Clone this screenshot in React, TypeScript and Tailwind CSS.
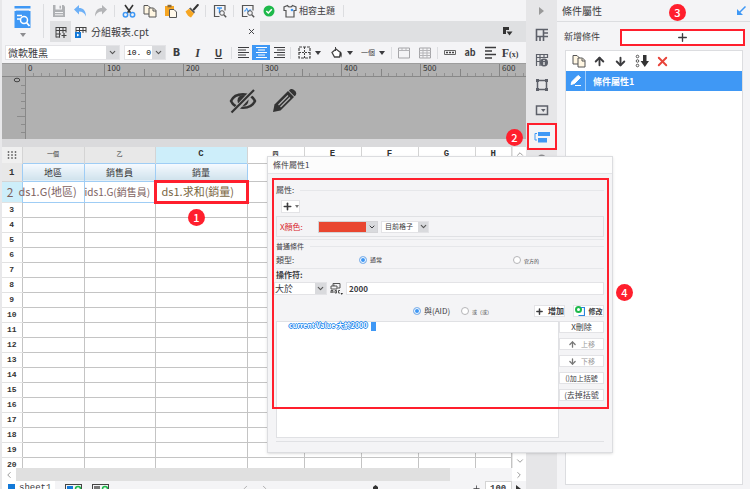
import type { ReactNode } from 'react'
import { clsx } from 'clsx'
import { ArrowDown, ArrowUp, ChevronDown, ChevronLeft, ChevronRight, ChevronUp, Plus, X } from 'lucide-react'

type IconProps = { className?: string }

const columns = [
  { label: '一個', className: 'w-[62px] text-[6px] font-normal' },
  { label: '乙', className: 'w-[71px] text-[6px] font-normal' },
  { label: 'C', className: 'w-[92px] text-[9px]' },
  { label: '四', className: 'w-[57px] text-[6px]' },
  { label: 'E', className: 'w-[57px] text-[9px]' },
  { label: 'F', className: 'w-[57px] text-[9px]' },
  { label: 'G', className: 'w-[57px] text-[9px]' },
  { label: 'H', className: 'text-[9px]' },
]
const emptyRows = Array.from({ length: 18 }, (_, i) => i + 3)

function Svg({ w = 14, h = 14, children, className }: { w?: number; h?: number; children: ReactNode; className?: string }) {
  return (
    <svg width={w} height={h} viewBox={`0 0 ${w} ${h}`} fill="none" aria-hidden="true" className={clsx('shrink-0', className)}>
      {children}
    </svg>
  )
}

function SaveIcon() {
  return (
    <Svg>
      <path d="M1 1h10.500l1.500 1.500v10.500h-12z" fill="#aeb0b3" />
      <path d="M3.500 1h6.500v4.500h-6.500z" fill="#f4f4f6" />
      <path d="M7.500 1.800h1.500v2.700h-1.500z" fill="#aeb0b3" />
      <path d="M3 8.500h8M3 10.800h8" stroke="#f4f4f6" />
    </Svg>
  )
}

function UndoIcon({ className }: IconProps) {
  return (
    <Svg className={className}>
      <path d="M1 5.500L6 1v3c4 0 7 2.500 7 8.500C11.500 9 9.500 7.500 6 7.500v3z" fill="currentColor" />
    </Svg>
  )
}

function CutIcon() {
  return (
    <Svg>
      <path d="M3 1l6 8.500M11 1l-6 8.500" stroke="#333" strokeWidth="1.600" />
      <circle cx="3.500" cy="10.800" r="2.200" stroke="#3f98f5" strokeWidth="1.500" />
      <circle cx="10.500" cy="10.800" r="2.200" stroke="#3f98f5" strokeWidth="1.500" />
    </Svg>
  )
}

function CopyIcon() {
  return (
    <Svg>
      <path d="M1 1.500h4l2.500 2.500v6h-6.500z" fill="#fff6e2" stroke="#555" />
      <path d="M6 4h4.500l2.500 2.500v6.500h-7z" fill="#fff6e2" stroke="#555" />
      <path d="M10 4.500v2.500h3" stroke="#555" />
    </Svg>
  )
}

function PasteIcon() {
  return (
    <Svg>
      <path d="M1 2h9v10h-9z" fill="#f6a623" />
      <path d="M3.500 0.800h4v2.500h-4z" fill="#8a6a3a" />
      <path d="M5.500 5.500h4.500l2.500 2.500v5.500h-7z" fill="#fff8ea" stroke="#555" />
    </Svg>
  )
}

function BrushIcon() {
  return (
    <Svg>
      <path d="M12.800 1l-4 4.500" stroke="#333" strokeWidth="2" strokeLinecap="round" />
      <path d="M5.500 3.500l4.500 4.500-1 1.500-5-5z" fill="#555" />
      <path d="M4 4.800l5 4.800-3 3.900c-2-.5-4-2.500-5.500-6z" fill="#f6a623" />
    </Svg>
  )
}

function PreviewIcon({ chart }: { chart?: boolean }) {
  return (
    <Svg>
      <path d="M12 6.500v-5h-10.500v11h5" stroke="#555" strokeWidth="1.200" />
      {chart ? <path d="M3 7h1.500l1.200-3 1.500 4 1-2h2" stroke="#3f98f5" /> : <path d="M4 4h5M6.500 4v5" stroke="#3f98f5" strokeWidth="1.400" />}
      <circle cx="9" cy="9" r="2.300" stroke="#555" />
      <path d="M10.800 10.800l2.400 2.400" stroke="#555" strokeWidth="1.500" />
    </Svg>
  )
}

function CheckBadge() {
  return (
    <Svg w={12} h={12}>
      <circle cx="6" cy="6" r="5.500" fill="#1eb94b" />
      <path d="M3.300 6l2 2 3.500-3.800" stroke="#fff" strokeWidth="1.500" />
    </Svg>
  )
}

function ShirtIcon() {
  return (
    <Svg>
      <path d="M4.500 1.500L1 3v3.500h2v6.500h8V6.500h2V3l-3.500-1.500C9 3.500 5 3.500 4.500 1.500z" stroke="#555" strokeWidth="1.200" />
      <circle cx="9" cy="6" r="1.300" fill="#3f98f5" />
    </Svg>
  )
}

function GridIcon({ accent }: { accent?: boolean }) {
  return (
    <Svg w={12} h={12}>
      <path d="M1 1.500h10M1 4.500h10M1 8h5M1 1v10.500M4.500 1v10.500M8 1v6M11 1v5.500M1 11h4" stroke="#444" />
      {accent ? <path d="M0 6h6v6h-6z" fill="#1379d8" /> : <path d="M9 7v5M6.500 9.500h5" stroke="#444" strokeWidth="1.200" />}
      {accent && <path d="M2 7.500l2.500 1.500-2.500 1.500" fill="#fff" />}
    </Svg>
  )
}

function AlignIcon({ kind }: { kind: 'left' | 'center' | 'right' | 'mixed' }) {
  const paths = {
    left: 'M1 1.500h11M1 4h8M1 6.500h11M1 9h8M1 11.500h11',
    center: 'M1 1.500h11M3 4h7M1 6.500h11M3 9h7M1 11.500h11',
    right: 'M1 1.500h11M4 4h8M1 6.500h11M4 9h8M1 11.500h11',
    mixed: 'M1 1.500h11M1 5h7M1 8.500h11M1 12h7',
  }
  return (
    <Svg w={13} h={13}>
      <path d={paths[kind]} stroke="currentColor" strokeWidth={kind === 'mixed' ? 1.7 : 1.2} />
    </Svg>
  )
}

function Caret({ className }: IconProps) {
  return (
    <Svg w={6} h={4} className={className}>
      <path d="M0 0h6l-3 4z" fill="currentColor" />
    </Svg>
  )
}

function BorderIcon() {
  return (
    <Svg w={13} h={13}>
      <path d="M1 1h11v11h-11z" stroke="#444" strokeWidth="1.200" strokeDasharray="3 1" />
      <path d="M6.500 1v11M1 6.500h11" stroke="#444" strokeDasharray="2 1" />
    </Svg>
  )
}

function FillIcon() {
  return (
    <Svg w={13} h={13}>
      <path d="M2 6.500l4-3.500 4.500 3.500-1 4.500h-5z" fill="#fff" stroke="#444" strokeWidth="1.300" />
      <path d="M5.500 5v-4" stroke="#444" />
      <path d="M10 5.500c2 .5 2 3 1.300 6-1-.7-1.800-3-1.300-6z" fill="#333" />
    </Svg>
  )
}

function CellsIcon({ grid }: { grid?: boolean }) {
  return (
    <Svg w={12} h={12}>
      <path d="M.5 1h11v10h-11z" stroke="#a5a5a8" />
      <path d={grid ? 'M.5 3.500h11M.5 6h11M.5 8.500h11M4 1v10M8 1v10' : 'M.5 3.500h11M4 1v2.500M8 1v2.500'} stroke="#b5b5b8" />
    </Svg>
  )
}

function ToolButton({ label, className, children }: { label: string; className?: string; children: ReactNode }) {
  return (
    <button type="button" aria-label={label} className={clsx('flex shrink-0 items-center justify-center', className ?? 'h-5 w-[21px]')}>
      {children}
    </button>
  )
}

function Separator({ className = 'mx-[3px]' }: IconProps) {
  return <span className={clsx('h-3 w-px shrink-0 bg-[#dcdde0]', className)} />
}

function SelectBox({ label, value, className, selectClass }: { label: string; value: string; className?: string; selectClass?: string }) {
  return (
    <span className={clsx('relative flex shrink-0 border border-[#e3e3e6] bg-white', className)}>
      <select aria-label={label} className={clsx('w-full appearance-none truncate bg-transparent leading-none outline-none', selectClass)}>
        <option>{value}</option>
      </select>
      <span className="pointer-events-none absolute inset-y-0 right-0 flex aspect-square items-center justify-center bg-[#d9dadd] text-[#555]">
        <ChevronDown size={9} strokeWidth={3} />
      </span>
    </span>
  )
}

function Badge({ n, className }: { n: number; className: string }) {
  return (
    <span className={clsx('absolute z-20 flex size-[17px] items-center justify-center rounded-full bg-[#ff1f2d] text-[11px] leading-none font-medium text-white', className)}>
      {n}
    </span>
  )
}

function Header() {
  return (
    <div className="flex h-[42px] shrink-0">
      <div className="flex w-[46px] shrink-0">
        <button type="button" aria-label="選單" className="flex w-[41px] flex-col items-center gap-[5px] pt-1.5 text-[#8d8d90]">
          <Svg w={17} h={22}>
            <path d="M.5 0h16v2.500h-16z" fill="#3f98f5" />
            <path d="M.5 5h16v17h-16z" fill="#3f98f5" />
            <path d="M2 5h13v-1h-13z" fill="#a9d0fb" />
            <path d="M3 9.500h5M3 13h3" stroke="#fff" strokeWidth="1.500" />
            <circle cx="10" cy="14" r="3.500" stroke="#fff" strokeWidth="1.500" />
            <path d="M12.500 16.500l3 3.500" stroke="#fff" strokeWidth="1.800" />
          </Svg>
          <Caret />
        </button>
        <span className="mt-1 h-[34px] w-px bg-[#dcdde0]" />
      </div>
      <div className="flex min-w-0 flex-1 flex-col">
        <div className="flex h-[21px] items-center">
          <ToolButton label="儲存"><SaveIcon /></ToolButton>
          <ToolButton label="復原" className="w-[21px] text-[#6db0f7]"><UndoIcon /></ToolButton>
          <ToolButton label="重做" className="w-[21px] text-[#b3b4b7]"><UndoIcon className="-scale-x-100" /></ToolButton>
          <Separator />
          <ToolButton label="剪下"><CutIcon /></ToolButton>
          <ToolButton label="複製"><CopyIcon /></ToolButton>
          <ToolButton label="貼上"><PasteIcon /></ToolButton>
          <ToolButton label="格式刷"><BrushIcon /></ToolButton>
          <Separator />
          <ToolButton label="預覽"><PreviewIcon /></ToolButton>
          <Separator />
          <ToolButton label="分析"><PreviewIcon chart /></ToolButton>
          <ToolButton label="檢查"><CheckBadge /></ToolButton>
          <button type="button" className="flex items-center gap-0.5 pl-1 text-[9px] leading-none">
            <ShirtIcon /> 相容主題
          </button>
          <Separator className="ml-2" />
        </div>
        <div className="ml-0.5 flex h-[21px] items-center bg-[#dfe0e2]">
          <ToolButton label="新增範本"><GridIcon /></ToolButton>
          <div className="flex h-full w-[189px] items-center gap-1 bg-[#f4f4f6] px-1 text-[10px] leading-none">
            <GridIcon accent />
            分組報表.cpt
            <button type="button" aria-label="關閉" className="ml-auto"><X size={9} strokeWidth={2.5} /></button>
          </div>
          <ToolButton label="範本清單" className="mr-2 ml-auto w-5">
            <Svg w={10} h={9}>
              <path d="M0 0h6v3h-3v4h-3z" fill="#333" />
              <path d="M3.500 4.500h6l-3 4z" fill="#333" />
            </Svg>
          </ToolButton>
        </div>
      </div>
    </div>
  )
}

function FormatBar() {
  return (
    <div className="flex h-[21px] shrink-0 items-center pl-[3px]">
      <SelectBox label="字型" value="微軟雅黑" className="mr-1 h-[15px] w-[115px]" selectClass="pl-0.5 text-[10px]" />
      <SelectBox label="字型大小" value="10. 0" className="h-[15px] w-[42px]" selectClass="pl-0.5 font-['Liberation_Mono',monospace] text-[8px] text-black" />
      <ToolButton label="粗體"><b className="font-['DejaVu_Sans',sans-serif] text-[10px]">B</b></ToolButton>
      <ToolButton label="斜體"><i className="font-['Liberation_Serif',serif] text-[12px] font-bold">I</i></ToolButton>
      <ToolButton label="底線"><span className="text-[10px] leading-none font-bold underline">U</span></ToolButton>
      <Separator className="mx-0.5" />
      <ToolButton label="靠左" className="w-[18px]"><AlignIcon kind="left" /></ToolButton>
      <button type="button" aria-label="置中" className="flex h-[15px] w-[18px] shrink-0 items-center justify-center bg-[#3f98f5] text-white"><AlignIcon kind="center" /></button>
      <ToolButton label="靠右" className="w-[18px]"><AlignIcon kind="right" /></ToolButton>
      <Separator className="mx-0.5" />
      <ToolButton label="框線" className="w-8 gap-1"><BorderIcon /><Caret /></ToolButton>
      <ToolButton label="填滿" className="w-8 gap-1"><FillIcon /><Caret /></ToolButton>
      <ToolButton label="樣式" className="w-8 gap-1"><span className="text-[7px] leading-none whitespace-nowrap">一個</span><Caret /></ToolButton>
      <Separator className="mx-0.5" />
      <ToolButton label="合併儲存格" className="w-5"><CellsIcon /></ToolButton>
      <ToolButton label="取消合併"><CellsIcon grid /></ToolButton>
      <Separator className="mx-0.5" />
      <ToolButton label="按鈕" className="w-5">
        <Svg w={12} h={5}><path d="M.5.500h11v4h-11z" stroke="#666" /><path d="M2 2.500h8" stroke="#444" strokeWidth="1.500" strokeDasharray="2 1" /></Svg>
      </ToolButton>
      <ToolButton label="文字" className="w-5"><span className="text-[9px] leading-none font-bold">ab</span></ToolButton>
      <ToolButton label="段落" className="w-5"><AlignIcon kind="mixed" /></ToolButton>
      <ToolButton label="公式" className="w-5"><span className="font-['Liberation_Serif',serif] text-[12px] font-bold">F<span className="text-[8px]">(x)</span></span></ToolButton>
    </div>
  )
}

function Canvas() {
  return (
    <div className="flex h-[76px] shrink-0 flex-col overflow-hidden border-t border-[#9d9d9d] bg-[#b1b1b1]">
      <div className="flex h-[13px] shrink-0 border-b border-[#888] pl-[23px] text-[8px] leading-none text-[#333]">
        {[0, 100, 200, 300, 400, 500, 600].map((n) => (
          <div key={n} className="relative w-[79px] shrink-0 pl-[3px]">
            {n}
            <Svg w={79} h={12} className="absolute inset-0">
              <path d="M.5 0v12M40.500 5v7" stroke="#858585" />
              <path d="M8.500 9v3M16.500 9v3M24.500 9v3M32.500 9v3M47.500 9v3M55.500 9v3M63.500 9v3M71.500 9v3" stroke="#909090" />
            </Svg>
          </div>
        ))}
      </div>
      <div className="flex min-h-0 flex-1">
        <div className="w-[24px] shrink-0 border-r border-[#888] bg-[#adadad]">
          <Svg w={23} h={62}>
            <path d="M19 8.500h4M19 16.500h4M19 24.500h4M19 31.500h4M15 39.500h8M19 47.500h4M19 55.500h4" stroke="#8b8b8b" />
            <ellipse cx="15" cy="3" rx="2.800" ry="1.800" stroke="#444" />
          </Svg>
        </div>
        <div className="flex flex-1 gap-[15px] pt-2.5 pl-[203px] text-[#333]">
          <Svg w={28} h={28}>
            <path d="M2 14c4-9 20-9 24 0-4 9-20 9-24 0z" stroke="currentColor" strokeWidth="2.500" />
            <circle cx="14" cy="13.500" r="5.500" fill="currentColor" />
            <path d="M25.500 2.500L5 24.500" stroke="#b1b1b1" strokeWidth="5" />
            <path d="M25 3L2.500 25.500" stroke="currentColor" strokeWidth="2.200" />
          </Svg>
          <Svg w={26} h={26}>
            <path d="M1 25l1.500-7.500L16 4l6 6L8.500 23.500z" fill="currentColor" />
            <path d="M17.500 3c2-3 9 2 6 5.500l-1 .8-5.500-5.500z" fill="currentColor" />
            <path d="M6.500 18L16 8.500M8.500 20L18 10.500" stroke="#b1b1b1" strokeWidth="1.200" />
          </Svg>
        </div>
      </div>
    </div>
  )
}

function Sheet() {
  return (
    <div className="flex min-h-0 flex-1 border-t-8 border-[#dadadc] bg-white">
      <div className="min-w-0 flex-1 overflow-hidden">
        <table className="w-full table-fixed border-collapse leading-none text-[#333]">
          <thead className="font-['Liberation_Mono','Noto_Sans_CJK_TC',monospace]">
            <tr className="h-4">
              <th className="w-[20px] border-r border-[#d4d4d4] bg-[#f0f0f0] p-0" aria-label="全選">
                <Svg w={10} h={8} className="mx-auto">
                  <path d="M1.500 0v8M5 0v8M8.500 0v8" stroke="#777" strokeWidth="1.500" strokeDasharray="2 1" />
                </Svg>
              </th>
              {columns.map((col, i) => (
                <th key={col.label} className={clsx('border-x border-[#d4d4d4] p-0', col.className, i < 2 && 'bg-[#e8e8e8]', i === 2 && 'bg-[#cdeefa]')}>
                  {col.label}
                </th>
              ))}
            </tr>
          </thead>
          <tbody>
            <tr className="h-[18px] text-[9px]">
              <th className="border-b border-[#d4d4d4] bg-[#e8e8e8] p-0 pt-1 font-['Liberation_Mono',monospace]">1</th>
              {['地區', '銷售員', '銷量'].map((name) => (
                <td key={name} className="border border-[#9fcdf5] bg-linear-to-b from-[#f6faff] to-[#cfe2ec] p-0 text-center">{name}</td>
              ))}
              {[0, 1, 2, 3, 4].map((n) => <td key={n} className="border border-[#c4c4c4] p-0" />)}
            </tr>
            <tr className="h-[21px] text-[11px] whitespace-nowrap text-[#7d625f]">
              <th className="bg-[#cdeefa] p-0 text-right text-[12px] font-normal">
                <span className="pr-2">2</span>
              </th>
              <td className="border border-[#9fcdf5] p-0"><div className="-ml-1">ds1.G(地區)</div></td>
              <td className="border border-[#9fcdf5] p-0 text-[10px]">ids1.G(銷售員)</td>
              <td className="relative border border-[#9fcdf5] p-0 pl-1.5 text-[#7a6743]">
                ds1.求和(銷量)
                <span className="absolute -inset-[2px] border-3 border-[#ff1f2d]" />
              </td>
              {[0, 1, 2, 3, 4].map((n) => <td key={n} className="border border-[#c4c4c4] p-0" />)}
            </tr>
            {emptyRows.map((row) => (
              <tr key={row} className="h-[15px]">
                <th className="border-y border-[#e2e2e2] p-0 font-['Liberation_Mono',monospace] text-[8px]">{row}</th>
                {columns.map((col) => <td key={col.label} className="border border-[#c4c4c4] p-0" />)}
              </tr>
            ))}
          </tbody>
        </table>
      </div>
      <div className="flex w-[14px] shrink-0 flex-col items-center justify-between border-l border-[#e6e6e6] py-0.5 text-[#888]">
        <ChevronUp size={10} />
        <ChevronDown size={10} />
      </div>
    </div>
  )
}

function StatusBar() {
  return (
    <>
      <div className="flex h-[13px] shrink-0 items-center text-[#888]">
        <span className="flex h-full w-[14px] items-center justify-center bg-white"><ChevronLeft size={10} /></span>
        <span className="h-full flex-1 bg-[#e0e0e0]" />
        <span className="w-[62px]" />
        <span className="flex h-full w-[14px] items-center justify-center bg-white"><ChevronRight size={10} /></span>
      </div>
      <div className="flex h-2 shrink-0 items-start gap-2.5 overflow-hidden font-['Liberation_Mono',monospace] text-[9px] leading-none">
        <button type="button" className="flex h-4 w-[53px] items-start gap-1 bg-white pt-[3px] pl-1.5">
          <Svg w={7} h={7}><path d="M0 0h7v7h-7z" fill="#1379d8" /></Svg>
          sheet1
        </button>
        {['#1379d8', '#777'].map((fill) => (
          <button key={fill} type="button" aria-label="新增工作表" className="pt-[3px]">
            <Svg w={17} h={8}>
              <path d="M0 .5h17M.5 0v8M16.500 0v8" stroke="#444" />
              <path d="M2 2h6v6h-6z" fill={fill} />
              <circle cx="13" cy="5" r="2.500" stroke="#1eb94b" strokeWidth="1.500" />
            </Svg>
          </button>
        ))}
        <span className="ml-[122px] flex gap-2.5 pt-[3px] text-[#999]"><ChevronLeft size={9} /><ChevronRight size={9} /></span>
        <span className="ml-auto pt-1"><Svg w={5} h={7}><path d="M0 2l2.500-2 2.500 2v5h-5z" fill="#333" /></Svg></span>
        <span className="ml-[84px] flex items-start gap-1 pr-1">
          <Plus size={9} className="mt-[3px]" />
          <input aria-label="縮放" defaultValue="100" className="h-4 w-[27px] border border-[#d4d4d4] bg-white px-1 text-[9px] leading-none font-bold" />
          <Svg w={6} h={8} className="mt-1"><path d="M0 0l5 4-2 1 1 3-4-2z" fill="#333" /></Svg>
        </span>
      </div>
    </>
  )
}

function SideRail() {
  return (
    <nav className="flex w-[31px] shrink-0 flex-col items-center bg-[#e6e6e8] text-[#5d6069]">
      <button type="button" aria-label="收合" className="flex h-[22px] items-center text-[#999]">
        <Svg w={5} h={8}><path d="M0 0l5 4-5 4z" fill="currentColor" /></Svg>
      </button>
      <ToolButton label="儲存格元素" className="h-[25px] w-full">
        <Svg>
          <path d="M1.500 1.500h7v7h-7zM1.500 8v5M5 9v4M8.500 9v4M9 1.500h4M9 5h4M9 8.500h4" stroke="currentColor" strokeWidth="1.600" />
        </Svg>
      </ToolButton>
      <ToolButton label="儲存格屬性" className="h-[25px] w-full">
        <Svg>
          <path d="M1 1.500h12M1 4.500h12M1.500 1v12M5 1v12M9 1v4M12.500 1v4M1 8.500h4" stroke="currentColor" strokeWidth="1.200" />
          <circle cx="9" cy="9.500" r="4" fill="currentColor" />
          <path d="M9 9v3M9 7v1" stroke="#fff" strokeWidth="1.200" />
        </Svg>
      </ToolButton>
      <ToolButton label="懸浮元素" className="h-[25px] w-full">
        <Svg>
          <path d="M2.500 2.500h9v9h-9z" stroke="currentColor" strokeWidth="1.500" />
          <path d="M1 1h3v3h-3zM10 1h3v3h-3zM1 10h3v3h-3zM10 10h3v3h-3z" fill="currentColor" />
        </Svg>
      </ToolButton>
      <ToolButton label="控件設定" className="h-[25px] w-full">
        <Svg><path d="M1.500 3h11v8.500h-11z" stroke="currentColor" strokeWidth="1.500" /><path d="M6 6h4.500l-2.200 3z" fill="currentColor" /></Svg>
      </ToolButton>
      <button type="button" aria-label="條件屬性" className="mt-px flex h-[27px] w-[30px] items-center justify-center border-2 border-[#ff1f2d] bg-[#f4f4f6] text-[#3f98f5]">
        <Svg w={16} h={12}>
          <path d="M4 1h12v4h-12zM4 7h9v4.500h-9z" fill="currentColor" />
          <path d="M3 2.500h-2v6.500h2" stroke="currentColor" />
        </Svg>
      </button>
      <Svg w={10} h={10} className="mt-1"><path d="M1 5c1-5 6-5 8 0" stroke="#8d8d90" strokeWidth="1.500" /></Svg>
    </nav>
  )
}

function PropertyPanel() {
  return (
    <aside className="flex w-[193px] shrink-0 flex-col pb-1">
      <div className="flex h-[22px] shrink-0 items-center justify-between border-b border-[#dcdde0] pr-1 pl-[5px]">
        <h2 className="text-[10px] leading-none">條件屬性</h2>
        <button type="button" aria-label="還原">
          <Svg w={9} h={9}><path d="M8.500.500L2 7" stroke="#3f98f5" strokeWidth="1.500" /><path d="M0 3v6h6z" fill="#3f98f5" /></Svg>
        </button>
      </div>
      <div className="flex h-7 shrink-0 items-center justify-between pr-[5px] pl-[7px]">
        <span className="text-[9px] leading-none">新增條件</span>
        <button type="button" aria-label="新增條件" className="mt-0.5 flex h-[17px] w-[125px] items-center justify-center border-2 border-[#ff1f2d] bg-white">
          <Plus size={13} strokeWidth={2.5} />
        </button>
      </div>
      <div className="mr-[7px] ml-2 flex min-h-0 flex-1 flex-col border border-[#dcdde0] bg-white">
        <div className="flex h-5 shrink-0 items-center pl-0.5">
          <ToolButton label="複製條件"><CopyIcon /></ToolButton>
          <ToolButton label="上移條件"><ArrowUp size={13} strokeWidth={3.5} /></ToolButton>
          <ToolButton label="下移條件"><ArrowDown size={13} strokeWidth={3.5} /></ToolButton>
          <ToolButton label="排序">
            <Svg>
              <path d="M8 1h3.500v6h2.500l-4.200 6-4.200-6h2.400z" fill="#333" />
              <circle cx="2.500" cy="2.500" r="1.300" stroke="#555" /><circle cx="2.500" cy="7" r="1.300" stroke="#555" /><circle cx="2.500" cy="11.500" r="1.300" stroke="#555" />
            </Svg>
          </ToolButton>
          <ToolButton label="刪除條件"><X size={15} strokeWidth={3} className="text-[#e8443a]" /></ToolButton>
        </div>
        <div className="flex h-5 shrink-0 items-center bg-[#3f98f5] text-white">
          <button type="button" aria-label="重新命名" className="flex h-full w-5 items-center justify-center border-r border-[#9dcbfa]">
            <Svg w={12} h={12}><path d="M1 9.500L2 6.500 8 .5l2.500 2-6 6zM5 10.500h6" fill="currentColor" stroke="currentColor" /></Svg>
          </button>
          <span className="pl-[7px] text-[9px] leading-none font-bold">條件屬性1</span>
        </div>
      </div>
    </aside>
  )
}

function Radio({ label, name, className, checked }: { label: string; name: string; className?: string; checked?: boolean }) {
  return (
    <label className={clsx('flex items-center gap-[3px] leading-none', className)}>
      <input
        type="radio"
        name={name}
        defaultChecked={checked}
        className="size-2 appearance-none rounded-full border border-[#b5b5b8] bg-white checked:border-[#8fb8e8] checked:bg-[#3f98f5] checked:shadow-[inset_0_0_0_1px_white]"
      />
      {label}
    </label>
  )
}

function SectionTitle({ children, className }: { children: ReactNode; className?: string }) {
  return (
    <div className={clsx('flex h-3 items-center gap-1.5 leading-none', className)}>
      {children}
      <span className="h-px flex-1 bg-[#e6e7ea]" />
    </div>
  )
}

const smallButton = 'flex h-3 items-center justify-center gap-1 border border-[#e3e3e6] bg-white leading-none whitespace-nowrap'

function ConditionDialog() {
  return (
    <div role="dialog" aria-label="條件屬性1" className="absolute top-[156px] left-[265px] z-10 w-[346px] border border-[#dcdde0] bg-[#f4f4f6] text-[8px] shadow-sm">
      <h3 className="flex h-[17px] items-center border-b border-[#e3e4e7] bg-[#fcfcfc] pl-[5px] leading-none">條件屬性1</h3>
      <div className="px-2 pt-2.5">
        <SectionTitle>屬性:</SectionTitle>
        <button type="button" aria-label="新增屬性" className="mt-1 ml-[5px] flex h-[13px] w-[19px] items-center justify-center gap-0.5 border border-[#e3e3e6] bg-white">
          <Plus size={11} strokeWidth={3.5} />
          <Svg w={4} h={3}><path d="M0 0h4l-2 3z" fill="#777" /></Svg>
        </button>
        <div className="mt-[3px] flex h-[21px] items-center border border-[#e0e1e4] pl-[3px]">
          <label htmlFor="color" className="w-[38px] leading-none text-[#d9252b]">X顏色:</label>
          <button id="color" type="button" className="mr-[3px] flex h-3 w-[60px] border border-[#d4d4d7] bg-[#e94630]">
            <span className="ml-auto flex h-full w-[11px] items-center justify-center bg-[#d9dadd]"><ChevronDown size={8} strokeWidth={3} /></span>
          </button>
          <SelectBox label="套用範圍" value="目前格子" className="h-3 w-12" selectClass="pl-[3px] text-[7px]" />
        </div>
        <SectionTitle className="mt-0.5 h-[13px] border-t border-[#e6e7ea] text-[7px]">普通條件</SectionTitle>
        <div className="flex h-[17px] items-center border-b border-[#e6e7ea] text-[6px]">
          <span className="w-[83px] text-[8px] leading-none">類型:</span>
          <Radio name="kind" label="通常" checked className="w-[154px]" />
          <Radio name="kind" label="官方的" className="text-[5px]" />
        </div>
        <div className="flex h-3 items-center leading-none font-bold">操作符:</div>
        <div className="mt-px -ml-0.5 flex h-[13px] items-center gap-[3px]">
          <SelectBox label="操作符" value="大於" className="h-[13px] w-[53px]" selectClass="text-[9px]" />
          <Svg w={13} h={13}>
            <path d="M3 4V1.500h7V6h-2.500M1 4h6v3h-6zM4 4V2.500" stroke="#555" />
            <path d="M1 11V8.500h2V11M1 10h2M5 8.500h1.500V11h-1.500zM10 8.500h-1.500V11h1.500" stroke="#555" />
            <path d="M10.500 11h2.500l-1.200 2z" fill="#333" />
          </Svg>
          <input aria-label="比較值" defaultValue="2000" className="h-[13px] min-w-0 flex-1 border border-[#e3e3e6] bg-white px-0.5 leading-none font-bold" />
        </div>
        <div className="mt-[9px] flex h-[14px] items-center">
          <Radio name="join" label="與(AID)" checked className="ml-[137px] w-[48px]" />
          <Radio name="join" label="或（或）" className="text-[5px]" />
          <button type="button" className={clsx(smallButton, 'ml-auto w-[31px] font-bold')}>
            <Plus size={9} strokeWidth={4} className="shrink-0" />增加
          </button>
          <button type="button" className={clsx(smallButton, 'ml-2 w-[31px] text-[7px] font-bold')}>
            <Svg w={10} h={10}>
              <circle cx="3.500" cy="3.500" r="2.500" stroke="#1eb94b" strokeWidth="2" />
              <path d="M6 1.500h3.500v8h-6" stroke="#2a86dd" strokeWidth="1.200" />
            </Svg>
            修改
          </button>
        </div>
        <div className="mt-[3px] mb-2.5 flex border-b border-[#e0e1e4] pb-[3px]">
          <div className="flex h-[117px] flex-1 items-start gap-1 border border-[#e0e1e4] bg-white pl-3">
            <span className="text-[7px] leading-none font-bold text-white [text-shadow:1px_0_#2389ee,-1px_0_#2389ee,0_1px_#2389ee,0_-1px_#2389ee]">current Value 大於2000</span>
            <span className="h-[9px] w-[5px] bg-[#3f98f5]" />
          </div>
          <div className="flex w-[45px] flex-col gap-[5px]">
            <button type="button" className={smallButton}>X刪除</button>
            <button type="button" className={clsx(smallButton, 'text-[7px] text-[#999]')}><ArrowUp size={9} strokeWidth={3.5} className="text-[#777]" />上移</button>
            <button type="button" className={clsx(smallButton, 'text-[7px] text-[#999]')}><ArrowDown size={9} strokeWidth={3.5} className="text-[#777]" />下移</button>
            <button type="button" className={clsx(smallButton, 'text-[7px]')}>()加上括號</button>
            <button type="button" className={smallButton}>(去掉括號</button>
          </div>
        </div>
      </div>
      <span className="pointer-events-none absolute top-[21px] right-[3px] bottom-[43px] left-1 border-2 border-[#ff1f2d]" />
    </div>
  )
}

export default function App() {
  return (
    <div className="relative flex h-screen overflow-hidden border-l-2 border-[#e8e8ea] bg-[#f4f4f6] font-['Noto_Sans_CJK_TC',sans-serif] text-[#3c3c3f]">
      <main className="flex min-w-0 flex-1 flex-col">
        <Header />
        <FormatBar />
        <Canvas />
        <Sheet />
        <StatusBar />
      </main>
      <SideRail />
      <PropertyPanel />
      <ConditionDialog />
      <Badge n={1} className="top-[209px] left-[186px]" />
      <Badge n={2} className="top-[129px] left-[504px]" />
      <Badge n={3} className="top-1 left-[667px]" />
      <Badge n={4} className="top-[284px] left-[614px]" />
    </div>
  )
}
